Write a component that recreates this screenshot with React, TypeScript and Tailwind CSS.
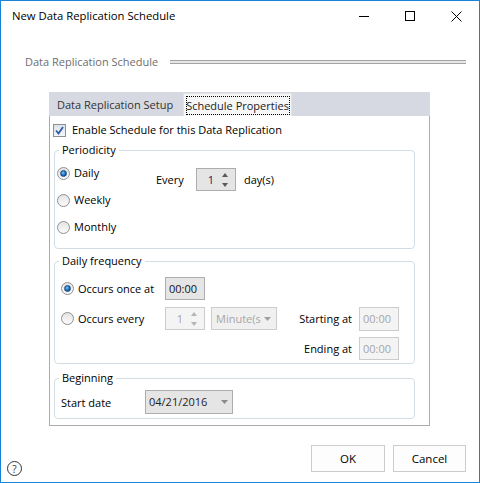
import React from "react";

function Radio({ checked }: { checked?: boolean }) {
  return (
    <div className="w-[13px] h-[13px] rounded-full border border-[#8e8f8f] bg-linear-to-b from-[#e4e4e4] to-[#fbfbfb] flex items-center justify-center shrink-0">
      {checked && (
        <div className="w-[7px] h-[7px] rounded-full bg-radial-[at_40%_35%] from-[#7fc6f0] via-[#1e72bd] to-[#0d3c78] border border-[#16487f]" />
      )}
    </div>
  );
}

function SpinArrows({ color }: { color: string }) {
  return (
    <div className="w-[10px] mr-[5px] flex flex-col items-center justify-center gap-[6px]">
      <svg width="6" height="4" viewBox="0 0 6 4">
        <polygon points="3,0 6,4 0,4" fill={color} />
      </svg>
      <svg width="6" height="4" viewBox="0 0 6 4">
        <polygon points="0,0 6,0 3,4" fill={color} />
      </svg>
    </div>
  );
}

function DropArrow({ color }: { color: string }) {
  return (
    <svg width="7" height="4" viewBox="0 0 7 4" className="shrink-0">
      <polygon points="0,0 7,0 3.5,4" fill={color} />
    </svg>
  );
}

export default function App() {
  return (
    <div className="w-[480px] h-[483px] border border-[#1883d7] bg-white flex flex-col font-['Open_Sans',sans-serif] text-[11px] leading-[16px] text-black select-none overflow-hidden whitespace-nowrap">
      {/* Title bar */}
      <div className="h-[30px] flex items-center shrink-0">
        <div className="pl-[11px] flex-1 text-[11.3px] text-[#000]">New Data Replication Schedule</div>
        <div className="flex h-full">
          <div className="w-[46px] flex items-center justify-center">
            <svg width="10" height="10" viewBox="0 0 10 10">
              <line x1="0" y1="5.5" x2="10" y2="5.5" stroke="#000" strokeWidth="1" />
            </svg>
          </div>
          <div className="w-[46px] flex items-center justify-center">
            <svg width="10" height="10" viewBox="0 0 10 10">
              <rect x="0.5" y="0.5" width="9" height="9" fill="none" stroke="#000" strokeWidth="1" />
            </svg>
          </div>
          <div className="w-[46px] flex items-center justify-center">
            <svg width="11" height="11" viewBox="0 0 11 11">
              <line x1="0.5" y1="0.5" x2="10.5" y2="10.5" stroke="#000" strokeWidth="1" />
              <line x1="10.5" y1="0.5" x2="0.5" y2="10.5" stroke="#000" strokeWidth="1" />
            </svg>
          </div>
        </div>
      </div>

      {/* Section header */}
      <div className="mt-[22px] h-[18px] flex items-center pl-[24px] pr-[13px] shrink-0">
        <div className="text-[#6e6e6e] text-[11px]">Data Replication Schedule</div>
        <div className="flex-1 ml-[12px] h-[4px] border-y border-[#a3a3a3] bg-[#e6e6e6]" />
      </div>

      {/* Tab control */}
      <div className="mt-[21px] ml-[48px] w-[381px] shrink-0">
        <div className="h-[24px] bg-[#d6d9e1] flex items-end">
          <div className="w-[134px] h-[23px] flex items-center pl-[8px] text-[#333]">Data Replication Setup</div>
          <div className="w-[109px] h-[23px] bg-[#f7f7f8] border border-b-0 border-[#e2e3e6] flex items-center justify-center">
            <div className="border border-dotted border-[#000] h-[19px] w-[104px] flex items-center justify-center leading-[15px] text-[#222]">
              Schedule Properties
            </div>
          </div>
        </div>

        <div className="h-[310px] border border-t-0 border-[#acacac] bg-white flex flex-col pt-[6px]">
          {/* Enable checkbox */}
          <div className="ml-[3px] h-[16px] flex items-center gap-[6px]">
            <div className="w-[13px] h-[13px] border border-[#8e8f8f] bg-linear-to-b from-[#dde3ea] to-[#f4f6f9] flex items-center justify-center">
              <svg width="9" height="9" viewBox="0 0 9 9">
                <path d="M1 4.5 L3.5 7.5 L8 1" fill="none" stroke="#2f5ca6" strokeWidth="1.8" />
              </svg>
            </div>
            <span>Enable Schedule for this Data Replication</span>
          </div>

          {/* Periodicity */}
          <fieldset className="mt-[4px] ml-[4px] w-[361px] border border-[#d3dde4] rounded-[4px]">
            <legend className="ml-[4px] px-[3px] leading-[16px]">Periodicity</legend>
            <div className="flex pt-[7px] pb-[13px] pl-[2px]">
              <div className="w-[99px] flex flex-col gap-[11px]">
                <div className="h-[16px] flex items-center gap-[4px]">
                  <Radio checked />
                  <span>Daily</span>
                </div>
                <div className="h-[16px] flex items-center gap-[4px]">
                  <Radio />
                  <span>Weekly</span>
                </div>
                <div className="h-[16px] flex items-center gap-[4px]">
                  <Radio />
                  <span>Monthly</span>
                </div>
              </div>
              <div className="mt-[3px] h-[23px] flex items-center self-start">
                <span className="w-[40px]">Every</span>
                <div className="w-[40px] h-[23px] border border-[#adadad] bg-[#e5e5e5] flex items-center">
                  <span className="flex-1 text-right pr-[6px] text-[#3a0a5a]">1</span>
                  <SpinArrows color="#5a5a5a" />
                </div>
                <span className="ml-[8px]">day(s)</span>
              </div>
            </div>
          </fieldset>

          {/* Daily frequency */}
          <fieldset className="mt-[4px] ml-[4px] w-[361px] border border-[#d3dde4] rounded-[4px]">
            <legend className="ml-[4px] px-[3px] leading-[16px]">Daily frequency</legend>
            <div className="flex flex-col pt-[8px] pb-[3px] gap-[7px]">
              <div className="h-[23px] flex items-center">
                <div className="w-[110px] pl-[6px] flex items-center gap-[4px]">
                  <Radio checked />
                  <span>Occurs once at</span>
                </div>
                <div className="w-[40px] h-[23px] border border-[#adadad] bg-[#e5e5e5] flex items-center pl-[3px] text-[#111]">
                  00:00
                </div>
              </div>
              <div className="h-[23px] flex items-center">
                <div className="w-[110px] pl-[6px] flex items-center gap-[4px]">
                  <Radio />
                  <span>Occurs every</span>
                </div>
                <div className="w-[40px] h-[23px] border border-[#cccccc] bg-[#f4f4f4] flex items-center">
                  <span className="flex-1 text-right pr-[6px] text-[#a6a6a6]">1</span>
                  <SpinArrows color="#b5b5b5" />
                </div>
                <div className="ml-[6px] w-[66px] h-[23px] border border-[#cccccc] bg-[#f0f0f0] flex items-center pl-[4px] pr-[5px] text-[#a6a6a6]">
                  <span className="flex-1 overflow-hidden">Minute(s</span>
                  <DropArrow color="#a0a0a0" />
                </div>
                <div className="w-[75px] text-right">Starting at</div>
                <div className="ml-[7px] w-[40px] h-[24px] border border-[#cccccc] bg-[#f4f4f4] flex items-center pl-[3px] text-[#a6a6a6]">
                  00:00
                </div>
              </div>
              <div className="h-[23px] flex items-center justify-end pr-[15px]">
                <div className="text-right">Ending at</div>
                <div className="ml-[7px] w-[40px] h-[23px] border border-[#cccccc] bg-[#f4f4f4] flex items-center pl-[3px] text-[#a6a6a6]">
                  00:00
                </div>
              </div>
            </div>
          </fieldset>

          {/* Beginning */}
          <fieldset className="mt-[6px] ml-[4px] w-[361px] border border-[#d3dde4] rounded-[4px]">
            <legend className="ml-[4px] px-[3px] leading-[16px]">Beginning</legend>
            <div className="flex items-center pt-[4px] pb-[4px] pl-[6px]">
              <div className="w-[84px] pt-[2px]">Start date</div>
              <div className="w-[88px] h-[24px] border border-[#adadad] bg-[#e5e5e5] flex items-center pl-[3px] pr-[4px] text-[#222]">
                <span className="flex-1">04/21/2016</span>
                <DropArrow color="#8a8a8a" />
              </div>
            </div>
          </fieldset>
        </div>
      </div>

      {/* Bottom buttons */}
      <div className="mt-[19px] h-[27px] flex items-start shrink-0">
        <div className="ml-[6px] mt-[16px] w-[15px] h-[15px] rounded-full border border-[#333] flex items-center justify-center text-[10px] leading-[10px] text-[#333]">
          ?
        </div>
        <div className="flex-1" />
        <div className="flex gap-[8px] pr-[13px]">
          <div className="w-[74px] h-[27px] border border-[#cccccc] bg-[#fdfdfd] flex items-center justify-center text-[11.5px]">OK</div>
          <div className="w-[73px] h-[27px] border border-[#cccccc] bg-[#fdfdfd] flex items-center justify-center text-[11.5px]">Cancel</div>
        </div>
      </div>
    </div>
  );
}
